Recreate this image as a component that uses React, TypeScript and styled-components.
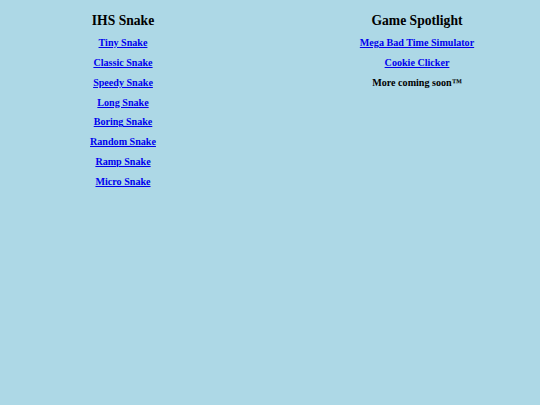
import * as React from 'react';
import styled, {createGlobalStyle} from 'styled-components';

const snakes = [
  'Tiny Snake',
  'Classic Snake',
  'Speedy Snake',
  'Long Snake',
  'Boring Snake',
  'Random Snake',
  'Ramp Snake',
  'Micro Snake',
];

const spotlight = ['Mega Bad Time Simulator', 'Cookie Clicker'];

const App = () => {
  return (
    <>
      <GlobalStyle />
      <Page>
        <Column>
          <Heading>IHS Snake</Heading>
          {snakes.map((name) => (
            <Item key={name}>
              <GameLink href="#">{name}</GameLink>
            </Item>
          ))}
        </Column>
        <Column>
          <Heading>Game Spotlight</Heading>
          {spotlight.map((name) => (
            <Item key={name}>
              <GameLink href="#">{name}</GameLink>
            </Item>
          ))}
          <Item>More coming soon™</Item>
        </Column>
      </Page>
    </>
  );
};

const GlobalStyle = createGlobalStyle`
  html, body {
    margin: 0;
    background: #add8e6;
    font-family: "Liberation Serif", "Times New Roman", serif;
    color: #000;
  }
`;

const Page = styled.div`
  display: grid;
  grid-template-columns: 246px 246px;
  column-gap: 48px;
  min-height: 405px;
  align-items: start;
`;

const Column = styled.div`
  display: flex;
  flex-direction: column;
  align-items: center;
`;

const Heading = styled.h2`
  font-size: 13.6px;
  font-weight: bold;
  line-height: 16px;
  margin: 13px 0 4px;
`;

const Item = styled.div`
  font-size: 10.1px;
  font-weight: bold;
  line-height: 19.85px;
  text-align: center;
`;

const GameLink = styled.a`
  color: #0000ee;
  text-decoration: underline;
`;

export default App;
